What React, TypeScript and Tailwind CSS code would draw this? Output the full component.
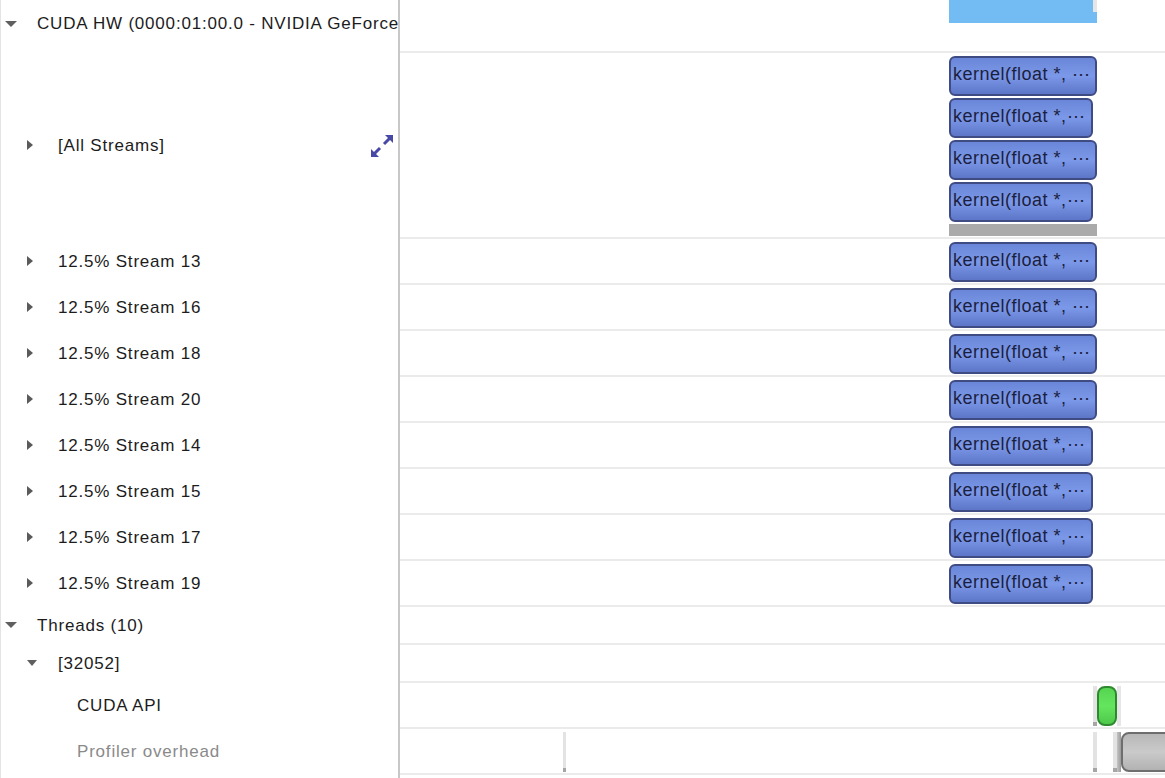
import React from "react";

type Bar = {
  kind: "kernel" | "blue" | "gray" | "strip" | "stripDark" | "green" | "box" | "light";
  left: number;
  top: number;
  w: number;
  h: number;
  label?: string;
};

interface Row {
  label: string;
  level: number;
  arrow?: "down" | "right";
  h: number;
  muted?: boolean;
  expand?: boolean;
  raised?: boolean;
  bars: Bar[];
}

const wide = "kernel(float *, \u22EF";
const narrow = "kernel(float *,\u22EF";

const k = (top: number, isWide: boolean): Bar => ({
  kind: "kernel",
  left: 549,
  top,
  w: isWide ? 148 : 144,
  h: 40,
  label: isWide ? wide : narrow,
});

const streams: [string, boolean][] = [
  ["13", true],
  ["16", true],
  ["18", true],
  ["20", true],
  ["14", false],
  ["15", false],
  ["17", false],
  ["19", false],
];

const rows: Row[] = [
  {
    label: "CUDA HW (0000:01:00.0 - NVIDIA GeForce RTX 3080)",
    level: 0,
    arrow: "down",
    h: 53,
    raised: true,
    bars: [
      { kind: "blue", left: 549, top: 0, w: 148, h: 23 },
      { kind: "light", left: 693, top: 0, w: 4, h: 12 },
    ],
  },
  {
    label: "[All Streams]",
    level: 1,
    arrow: "right",
    h: 186,
    expand: true,
    bars: [k(3, true), k(45, false), k(87, true), k(129, false), { kind: "gray", left: 549, top: 171, w: 148, h: 12 }],
  },
  ...streams.map(([n, isWide]) => ({
    label: `12.5% Stream ${n}`,
    level: 1,
    arrow: "right" as const,
    h: 46,
    bars: [k(3, isWide)],
  })),
  { label: "Threads (10)", level: 0, arrow: "down", h: 38, bars: [] },
  { label: "[32052]", level: 1, arrow: "down", h: 38, bars: [] },
  {
    label: "CUDA API",
    level: 2,
    h: 46,
    bars: [
      { kind: "strip", left: 693, top: 3, w: 4, h: 40 },
      { kind: "green", left: 697, top: 3, w: 20, h: 40 },
      { kind: "light", left: 717, top: 3, w: 4, h: 40 },
    ],
  },
  {
    label: "Profiler overhead",
    level: 2,
    h: 46,
    muted: true,
    bars: [
      { kind: "strip", left: 163, top: 3, w: 3, h: 40 },
      { kind: "strip", left: 693, top: 3, w: 4, h: 40 },
      { kind: "strip", left: 713, top: 3, w: 4, h: 40 },
      { kind: "stripDark", left: 717, top: 3, w: 4, h: 40 },
      { kind: "box", left: 721, top: 3, w: 70, h: 40 },
    ],
  },
];

function Arrow({ dir, small }: { dir: "down" | "right"; small?: boolean }) {
  if (dir === "right") {
    return (
      <svg width="6" height="10" viewBox="0 0 6 10">
        <polygon points="0,0 6,5 0,10" fill="#5a5a5a" />
      </svg>
    );
  }
  const w = small ? 10 : 12;
  return (
    <svg width={w} height="6" viewBox={`0 0 ${w} 6`}>
      <polygon points={`0,0 ${w},0 ${w / 2},6`} fill="#5f5f5f" />
    </svg>
  );
}

function ExpandIcon() {
  return (
    <svg width="22" height="22" viewBox="0 0 22 22">
      <polygon points="0,22 0,14 8,22" fill="#4848a6" />
      <line x1="3" y1="19" x2="9" y2="13" stroke="#4848a6" strokeWidth="3" />
      <line x1="13" y1="9" x2="19" y2="3" stroke="#4848a6" strokeWidth="3" />
      <polygon points="22,0 14,0 22,8" fill="#4848a6" />
    </svg>
  );
}

function TimelineBar({ bar }: { bar: Bar }) {
  const pos = { left: bar.left, top: bar.top, width: bar.w, height: bar.h };
  switch (bar.kind) {
    case "kernel":
      return (
        <div
          style={pos}
          className="absolute flex items-center overflow-hidden whitespace-nowrap rounded-[6px] border-2 border-[#3f4c84] bg-gradient-to-b from-[#6a86d8] via-[#7c98e8] to-[#5d76c8] pb-[5px] pl-[2px] text-[18px] leading-none tracking-[0.5px] text-[#1b1f3f]"
        >
          {bar.label}
        </div>
      );
    case "blue":
      return <div style={pos} className="absolute bg-[#73bcf3]" />;
    case "gray":
      return <div style={pos} className="absolute bg-[#aaaaaa]" />;
    case "light":
      return <div style={pos} className="absolute bg-[#e6e6e6]" />;
    case "strip":
      return (
        <div style={pos} className="absolute flex flex-col justify-end bg-[#e3e3e3]">
          <div className="h-[4px] bg-[#a6a6a6]" />
        </div>
      );
    case "stripDark":
      return <div style={pos} className="absolute bg-gradient-to-r from-[#c4c4c4] to-[#9c9c9c]" />;
    case "green":
      return (
        <div
          style={pos}
          className="absolute rounded-[8px] border-2 border-[#2f8a2f] bg-gradient-to-b from-[#56d452] via-[#64e65e] to-[#4fc84b]"
        />
      );
    case "box":
      return (
        <div
          style={pos}
          className="absolute rounded-[8px] border-2 border-[#6e6e6e] bg-gradient-to-b from-[#b8b8b8] via-[#cacaca] to-[#b2b2b2]"
        />
      );
  }
}

export default function App() {
  return (
    <div className="flex h-[778px] w-[1165px] flex-col overflow-hidden bg-white [font-family:'Liberation_Sans',Arial,sans-serif]">
      {rows.map((row, i) => (
        <div key={i} style={{ height: row.h }} className="flex shrink-0">
          <div
            className={`relative flex w-[400px] shrink-0 items-center overflow-hidden border-l border-r-2 border-l-[#e4e4e4] border-r-[#c8c8c8] ${
              row.raised ? "pb-[6px]" : "pb-[2px]"
            }`}
          >
            <div
              className={
                row.level === 0
                  ? "flex w-[36px] shrink-0 justify-start pl-[4px]"
                  : row.level === 1
                    ? "flex w-[57px] shrink-0 justify-start pl-[26px]"
                    : "w-[76px] shrink-0"
              }
            >
              {row.arrow && (
                <Arrow dir={row.arrow} small={row.level === 1 && row.arrow === "down"} />
              )}
            </div>
            <span
              className={`whitespace-nowrap text-[17px] leading-none tracking-[0.8px] ${
                row.muted ? "text-[#8a8a8a]" : "text-[#1c1c1c]"
              }`}
            >
              {row.label}
            </span>
            {row.expand && (
              <div className="absolute right-[5px] top-1/2 -translate-y-[11px]">
                <ExpandIcon />
              </div>
            )}
          </div>
          <div className="relative flex-1 overflow-hidden border-b-2 border-[#ebebeb]">
            {row.bars.map((b, j) => (
              <TimelineBar key={j} bar={b} />
            ))}
          </div>
        </div>
      ))}
      <div className="flex flex-1">
        <div className="w-[400px] shrink-0 border-l border-r-2 border-l-[#e4e4e4] border-r-[#c8c8c8]" />
        <div className="flex-1" />
      </div>
    </div>
  );
}
